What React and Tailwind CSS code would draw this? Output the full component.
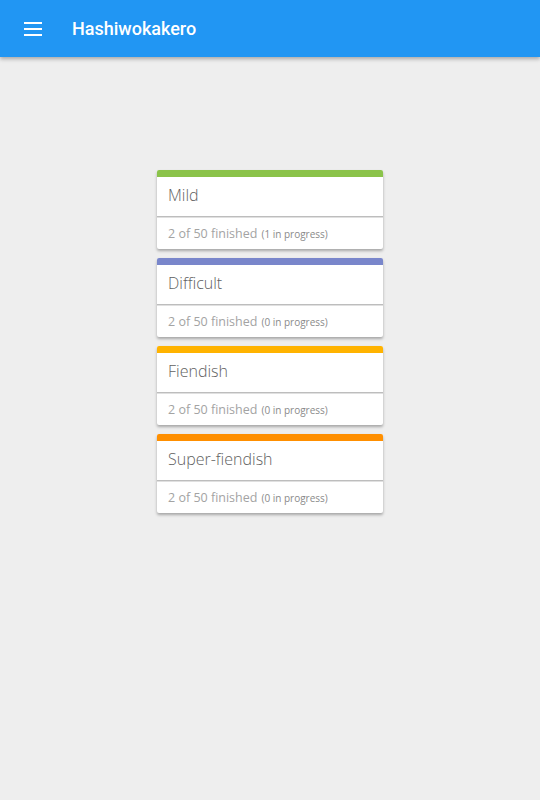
import React from 'react';

const LEVELS = [
  { name: 'Mild', color: 'bg-[#8bc34a]', done: 2, total: 50, progress: 1 },
  { name: 'Difficult', color: 'bg-[#7986cb]', done: 2, total: 50, progress: 0 },
  { name: 'Fiendish', color: 'bg-[#ffb300]', done: 2, total: 50, progress: 0 },
  { name: 'Super-fiendish', color: 'bg-[#ff8f00]', done: 2, total: 50, progress: 0 },
];

const LevelCard = ({ level }) => (
  <div className="w-[226px] bg-white rounded-[2px] shadow-[0_2px_3px_rgba(0,0,0,0.3)] overflow-hidden font-['Open_Sans',sans-serif]">
    <div className={`h-[7px] ${level.color}`}></div>
    <div className="h-[39px] flex items-center px-[11px] pb-[3px] text-[16px] font-light text-[#616161]">
      {level.name}
    </div>
    <div className="h-[2px] bg-[#bdbdbd] border-b border-[#e0e0e0]"></div>
    <div className="h-[31px] flex items-center px-[11px] pt-[2px] text-[12.5px] text-[#a3a3a3]">
      {level.done} of {level.total} finished
      <span className="ml-[4px] text-[10px] text-[#8a8a8a]">({level.progress} in progress)</span>
    </div>
  </div>
);

const App = () => {
  return (
    <div className="min-h-[800px] bg-[#eeeeee] font-['Roboto',sans-serif]">
      <header className="h-[57px] bg-[#2196f3] flex items-center shadow-[0_2px_4px_rgba(0,0,0,0.3)] relative">
        <div className="w-[72px] pl-[24px]">
          <div className="flex flex-col gap-[4px] w-[18px]">
            <div className="h-[2px] bg-white"></div>
            <div className="h-[2px] bg-white"></div>
            <div className="h-[2px] bg-white"></div>
          </div>
        </div>
        <h1 className="text-white text-[18px] font-medium">Hashiwokakero</h1>
      </header>
      <main className="flex flex-col items-center gap-[9px] pt-[113px]">
        {LEVELS.map((l) => (
          <LevelCard key={l.name} level={l} />
        ))}
      </main>
    </div>
  );
};

export default App;
